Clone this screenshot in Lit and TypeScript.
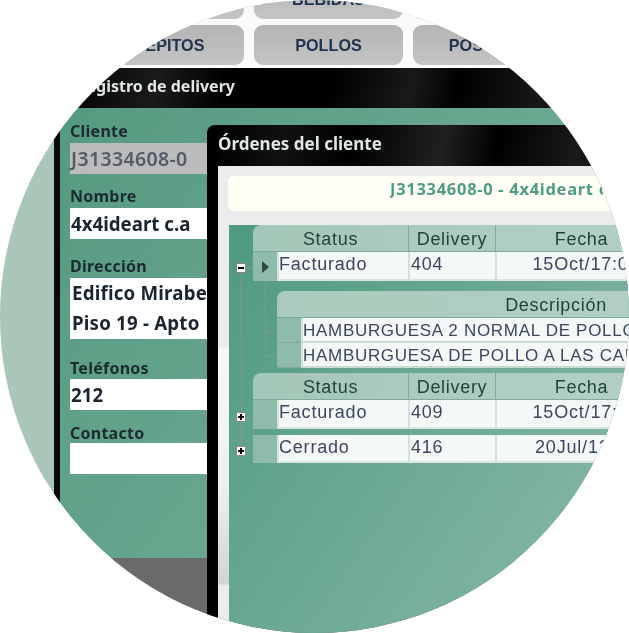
import { LitElement, html, css } from "lit";
import { customElement } from "lit/decorators.js";

@customElement("app-root")
export class AppRoot extends LitElement {
  static styles = css`
    :host { display: block; width: 629px; height: 633px; background: #fff; overflow: hidden; }
    * { box-sizing: border-box; }
    .stage { position: relative; width: 629px; height: 633px; border-radius: 50%; overflow: hidden; background: #a9c6b9; font-family: "Open Sans", "Noto Sans", sans-serif; }
    .soft { filter: blur(0.35px); }
    .nav { height: 67px; background: #fafafa; display: flex; flex-direction: column; gap: 6px; padding-left: 95px; overflow: hidden; }
    .nav-row { display: flex; gap: 10px; flex: none; height: 40px; }
    .nav-row.first { margin-top: -21px; }
    .nav-btn { flex: none; width: 149px; height: 40px; border-radius: 9px; background: linear-gradient(#b4b4b4, #c4c4c4); color: #223350; font: 700 16.2px/41px "Liberation Sans", sans-serif; text-align: center; }
    .nav-btn.ghost { color: transparent; }
    .reg { margin-left: 54px; border-left: 6px solid #0a0a0a; height: 566px; display: flex; flex-direction: column; }
    .bar { flex: none; height: 41px; border-top: 1px solid #fff; background: linear-gradient(100deg, #000 0%, #1a1a1a 18%, #000 30%, #000 48%, #191919 62%, #000 70%, #181818 84%, #050505 95%); color: #dfe6e6; font: 700 16px/37px "Noto Sans", sans-serif; }
    .reg .bar { margin-left: -6px; padding-left: 22px; white-space: nowrap; }
    .reg-body { flex: none; height: 450px; background: linear-gradient(125deg, #559a80, #7cb29d); padding: 13px 0 0 10px; color: #1f2a33; }
    .reg-foot { flex: 1; background: #6a6a6a; }
    .lbl { font: 700 16px/20px "Noto Sans", sans-serif; letter-spacing: .25px; color: #1c2a30; }
    .fld { height: 31px; margin-top: 2px; width: 400px; background: #fff; font: 700 18.7px/31px "Noto Sans", sans-serif; color: #1a2530; padding-left: 1px; }
    .fld.off { background: #bcbcbc; color: #555c64; font-weight: 600; letter-spacing: .35px; font-size: 19.5px; }
    .fld.tall { height: 61px; line-height: 30px; padding-left: 2px; letter-spacing: .2px; }
    .fld.near { margin-top: 1px; }
    .fld.tight { margin-top: 0; }
    .gap-a { margin-top: 12px; }
    .gap-b { margin-top: 17px; }
    .gap-c { margin-top: 19px; }
    .gap-d { margin-top: 13px; }
    .modal { position: absolute; left: 207px; top: 125px; width: 460px; height: 520px; background: #000; border-radius: 8px 0 0 0; border-left: 11px solid #000; display: flex; flex-direction: column; }
    .modal .bar { background: linear-gradient(100deg, #000 0%, #111 15%, #000 30%, #202020 50%, #000 62%, #1a1a1a 80%, #000 95%); border: 0; font-size: 17px; line-height: 37px; height: 41px; padding-left: 0; }
    .modal-body { flex: 1; background: linear-gradient(#ececec 0, #ececec 181px, #f6f6f6 183px, #eef0f0 320px, #cfd4d6 418px, #ececec 419px); padding: 10px 0 0 10px; display: flex; flex-direction: column; }
    .banner { flex: none; height: 35px; background: #fffff6; border-radius: 5px; padding-left: 162px; overflow: hidden; }
    .banner-text { display: block; width: 213px; overflow: hidden; white-space: nowrap; color: #4f9c85; font: 700 16.5px/26px "Noto Sans", sans-serif; letter-spacing: .7px; }
    .grid { position: relative; flex: 1; margin: 14px 0 0 1px; background: linear-gradient(125deg, #4f9a80, #8fbcab); display: flex; flex-direction: column; color: #3c4660; font: 400 18px/24px "Liberation Sans", sans-serif; overflow: hidden; }
    .groups { margin-left: 24px; width: 413px; }
    .hdr { display: grid; grid-template-columns: 155px 87px 172px; height: 27px; background: linear-gradient(90deg, #a3c7b8, #b5d0c5); border-bottom: 1px solid #7fa99a; border-radius: 8px 0 0 0; color: #21423a; line-height: 28px; letter-spacing: .7px; text-align: center; }
    .hdr > div + div { border-left: 1px solid #84a99b; }
    .row { display: grid; grid-template-columns: 24px 131px 87px 172px; height: 29px; background: #8fbbaa; letter-spacing: .8px; }
    .row.last { height: 28px; }
    .cell { background: #f4f8f7; border-left: 2px solid #d2e1db; padding-left: 1px; line-height: 25px; border-bottom: 2px solid #dbe6e2; white-space: nowrap; }
    .cell.first { padding-left: 0; }
    .cell.c { text-align: center; padding-left: 8px; }
    .ind { background: #8fbbaa; display: flex; align-items: center; justify-content: center; }
    .ind svg { display: block; }
    .gap { height: 10px; }
    .gap.s { height: 5px; }
    .gap.m { height: 6px; }
    .sub { margin-left: 24px; width: 560px; }
    .sub-hdr { height: 27px; border-bottom: 1px solid #7fa99a; background: linear-gradient(90deg, #a9cabc, #b7d1c6); border-radius: 8px 0 0 0; color: #21423a; line-height: 28px; letter-spacing: .7px; text-align: center; width: 558px; }
    .sub-row { display: grid; grid-template-columns: 24px 534px; grid-template-rows: 25px; height: 25px; background: #8fbbaa; color: #3c4660; font-size: 17px; letter-spacing: .7px; }
    .sub-row .ind { border-bottom: 1px solid #7fa99a; }
    .sub-row .cell { border-bottom: 2px solid #c9d9d3; padding-left: 0; }
    .node { position: absolute; left: 7px; width: 10px; height: 10px; background: #fff; border: 1px solid #8a8a8a; }
    .node::before { content: ""; position: absolute; left: 1px; width: 6px; top: 3px; height: 2px; background: #000; }
    .node.plus::after { content: ""; position: absolute; top: 1px; height: 6px; left: 3px; width: 2px; background: #000; }
    .n1 { top: 38px; }
    .n2 { top: 187px; }
    .n3 { top: 221px; }
    .vline { position: absolute; width: 1px; background: #7f9a90; }
    .hline { position: absolute; height: 1px; background: #7f9a90; }
    .v1 { left: 12px; top: 48px; height: 173px; }
    .v2 { left: 36px; top: 56px; height: 75px; }
    .h1, .h2, .h3 { left: 17px; width: 7px; }
    .h1 { top: 43px; }
    .h2 { top: 192px; }
    .h3 { top: 226px; }
    .h4, .h5 { left: 36px; width: 12px; }
    .h4 { top: 107px; }
    .h5 { top: 131px; }
  `;

  render() {
    const arrow = html`<svg width="7" height="12" viewBox="0 0 7 12"><path d="M0 0 7 6 0 12Z" fill="#2f4a42"/></svg>`;
    const hdr = html`<div class="hdr"><div>Status</div><div>Delivery</div><div>Fecha</div></div>`;
    return html`
      <div class="stage">
        <div class="nav soft">
          <div class="nav-row first">
            <div class="nav-btn ghost">.</div><div class="nav-btn">BEBIDAS</div><div class="nav-btn ghost">.</div>
          </div>
          <div class="nav-row">
            <div class="nav-btn">PEPITOS</div><div class="nav-btn">POLLOS</div><div class="nav-btn">POSTRES</div>
          </div>
        </div>
        <div class="reg soft">
          <div class="bar">Registro de delivery</div>
          <div class="reg-body">
            <div class="lbl">Cliente</div>
            <div class="fld off">J31334608-0</div>
            <div class="lbl gap-a">Nombre</div>
            <div class="fld">4x4ideart c.a</div>
            <div class="lbl gap-b">Dirección</div>
            <div class="fld tall">Edifico Mirabel<br />Piso 19 - Apto</div>
            <div class="lbl gap-c">Teléfonos</div>
            <div class="fld near">212</div>
            <div class="lbl gap-d">Contacto</div>
            <div class="fld tight"></div>
          </div>
          <div class="reg-foot"></div>
        </div>
        <div class="modal soft">
          <div class="bar">Órdenes del cliente</div>
          <div class="modal-body">
            <div class="banner"><span class="banner-text">J31334608-0 - 4x4ideart c.a</span></div>
            <div class="grid">
              <div class="groups">
                ${hdr}
                <div class="row">
                  <div class="ind">${arrow}</div>
                  <div class="cell first">Facturado</div><div class="cell">404</div><div class="cell c">15Oct/17:05</div>
                </div>
                <div class="gap"></div>
                <div class="sub">
                  <div class="sub-hdr">Descripción</div>
                  <div class="sub-row"><div class="ind"></div><div class="cell">HAMBURGUESA 2 NORMAL DE POLLO</div></div>
                  <div class="sub-row"><div class="ind"></div><div class="cell">HAMBURGUESA DE POLLO A LAS CARBONARA</div></div>
                </div>
                <div class="gap s"></div>
                ${hdr}
                <div class="row">
                  <div class="ind"></div>
                  <div class="cell first">Facturado</div><div class="cell">409</div><div class="cell c">15Oct/17:15</div>
                </div>
                <div class="gap m"></div>
                <div class="row last">
                  <div class="ind"></div>
                  <div class="cell first">Cerrado</div><div class="cell">416</div><div class="cell c">20Jul/12:30</div>
                </div>
              </div>
              <div class="vline v1"></div>
              <div class="vline v2"></div>
              <div class="hline h1"></div>
              <div class="hline h2"></div>
              <div class="hline h3"></div>
              <div class="hline h4"></div>
              <div class="hline h5"></div>
              <div class="node n1"></div>
              <div class="node plus n2"></div>
              <div class="node plus n3"></div>
            </div>
          </div>
        </div>
      </div>
    `;
  }
}
